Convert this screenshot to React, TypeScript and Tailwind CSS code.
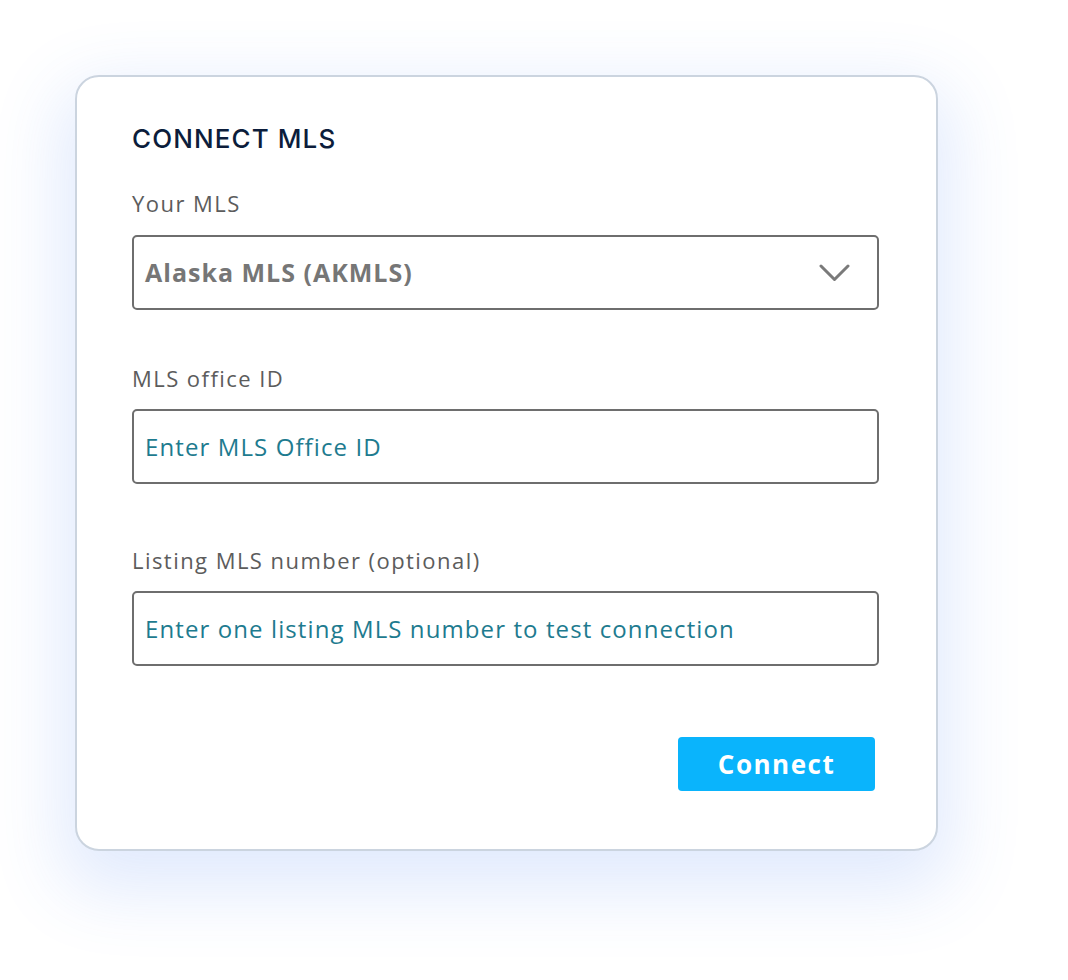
function Field({ label, placeholder, labelGap }: { label: string; placeholder: string; labelGap: string }) {
  return (
    <div className={labelGap}>
      <div className="h-8 leading-8 text-[22px] tracking-[1.45px] text-[#5c5c5c]">{label}</div>
      <div className="mt-[15px] h-[75px] rounded-[5px] border-2 border-[#6e6e6e] flex items-center px-[11px]">
        <span className="text-[24px] tracking-[1.1px] text-[#1e7b8f]">{placeholder}</span>
      </div>
    </div>
  )
}

export default function App() {
  return (
    <main
      className="min-h-screen bg-white pt-[75px] pl-[75px]"
      style={{ fontFamily: '"Open Sans", "Liberation Sans", sans-serif' }}
    >
      <div className="w-[863px] h-[776px] rounded-[24px] border-2 border-[#cbd4df] bg-white shadow-[0_26px_70px_14px_rgba(70,125,245,0.16)] pt-[46px] pl-[55px] pr-[57px]">
        <h1
          className="h-8 leading-8 text-[26px] font-medium tracking-[1.1px] text-[#0c1d3b]"
          style={{ fontFamily: 'Inter, "Open Sans", sans-serif' }}
        >
          CONNECT MLS
        </h1>

        <div className="mt-[32px]">
          <div className="h-8 leading-8 text-[22px] tracking-[1.45px] text-[#5c5c5c]">Your MLS</div>
          <div className="mt-4 h-[75px] rounded-[5px] border-2 border-[#6e6e6e] flex items-center justify-between pl-[11px] pr-[27px]">
            <span className="text-[25px] font-bold tracking-[1px] text-[#767676]">Alaska MLS (AKMLS)</span>
            <svg width="31" height="18" viewBox="0 0 31 18" fill="none">
              <path d="M2 2 L15.5 15.5 L29 2" stroke="#7a7a7a" strokeWidth="3" strokeLinecap="round" strokeLinejoin="round" />
            </svg>
          </div>
        </div>

        <Field label="MLS office ID" placeholder="Enter MLS Office ID" labelGap="mt-[52px]" />
        <Field
          label="Listing MLS number (optional)"
          placeholder="Enter one listing MLS number to test connection"
          labelGap="mt-[60px]"
        />

        <div className="mt-[71px] flex justify-end pr-1">
          <button className="w-[197px] h-[54px] rounded-[4px] bg-[#0ab4fc] text-white text-[26px] font-bold tracking-[1.5px]">
            Connect
          </button>
        </div>
      </div>
    </main>
  )
}
